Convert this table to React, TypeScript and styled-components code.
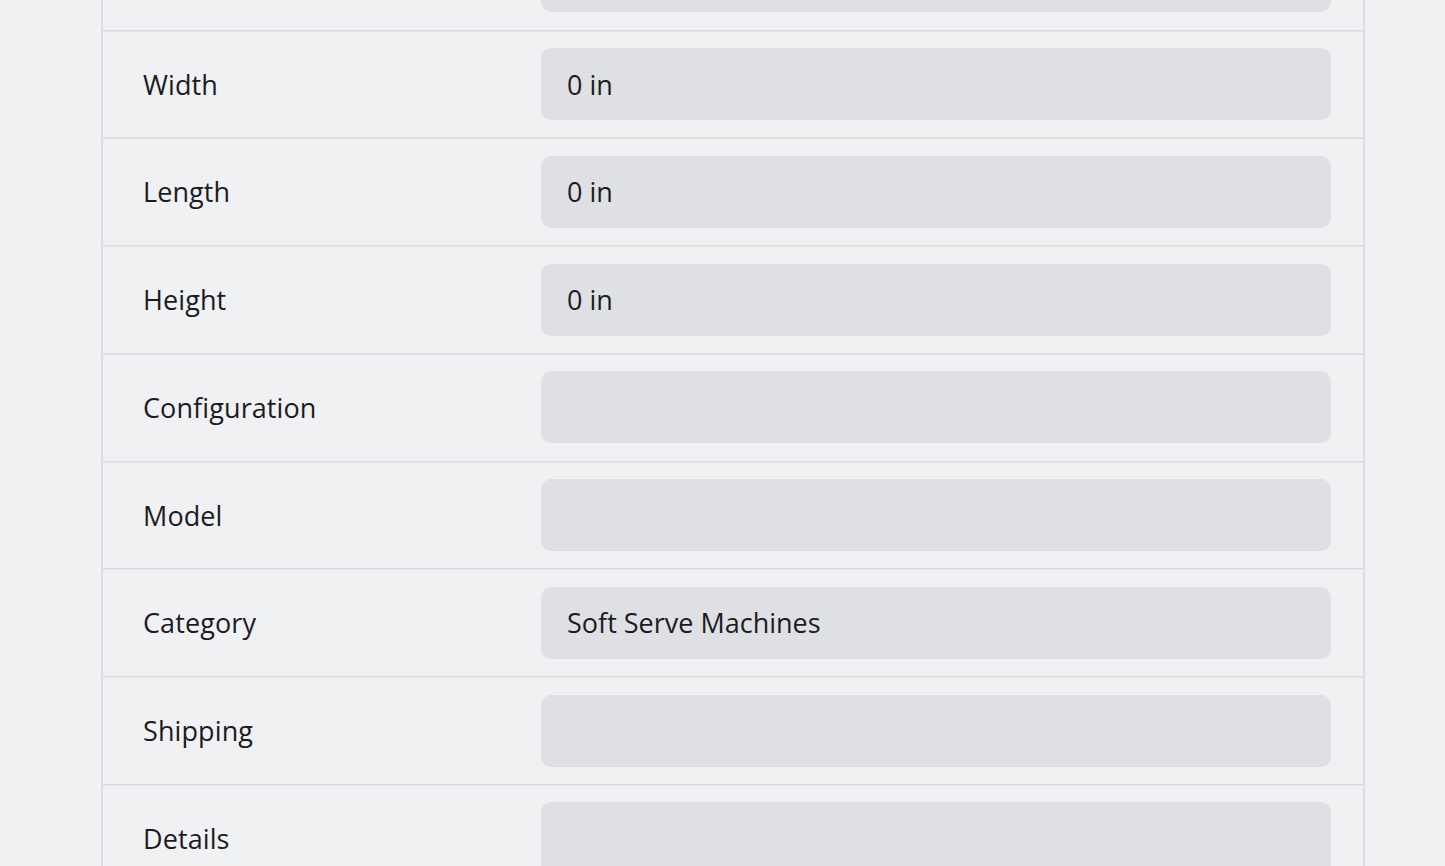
import React from "react";
import styled, { createGlobalStyle } from "styled-components";

const GlobalStyle = createGlobalStyle`
  html, body {
    margin: 0;
    padding: 0;
    background: #f0f1f3;
    height: 100%;
    overflow: hidden;
  }
  body {
    font-family: "Open Sans", "Noto Sans", "Liberation Sans", sans-serif;
    color: #1c1c1f;
  }
`;

const Viewport = styled.div`
  height: 866px;
  overflow: hidden;
`;

const Panel = styled.div`
  margin: -78px 0 0 101px;
  width: 1264px;
  box-sizing: border-box;
  border-left: 2px solid #dcdde0;
  border-right: 2px solid #dcdde0;
  background: #f0f1f3;
`;

const Row = styled.div`
  display: grid;
  grid-template-columns: 398px 1fr;
  align-items: start;
  padding: 17.4px 32px 17.35px 40px;
  border-top: 1px solid #d9dadd;
  box-shadow: inset 0 1px 0 #e4e5e8;
`;

const Label = styled.div`
  height: 72px;
  display: flex;
  align-items: center;
  font-size: 27px;
  letter-spacing: 0.1px;
`;

const Field = styled.div<{ $tall?: boolean }>`
  height: ${(p) => (p.$tall ? "160px" : "72px")};
  background: #dfe0e3;
  border-radius: 10px;
  box-sizing: border-box;
  padding: ${(p) => (p.$tall ? "18px 26px" : "0 26px")};
  display: flex;
  align-items: ${(p) => (p.$tall ? "flex-start" : "center")};
  font-size: 27px;
`;

const rows: { id: string; label: string; value: string; tall?: boolean }[] = [
  { id: "top", label: "", value: "" },
  { id: "width", label: "Width", value: "0 in" },
  { id: "length", label: "Length", value: "0 in" },
  { id: "height", label: "Height", value: "0 in" },
  { id: "configuration", label: "Configuration", value: "" },
  { id: "model", label: "Model", value: "" },
  { id: "category", label: "Category", value: "Soft Serve Machines" },
  { id: "shipping", label: "Shipping", value: "" },
  { id: "details", label: "Details", value: "", tall: true },
];

export default function App() {
  return (
    <Viewport>
      <GlobalStyle />
      <Panel>
        {rows.map((r) => (
          <Row key={r.id}>
            <Label>{r.label}</Label>
            <Field $tall={r.tall}>{r.value}</Field>
          </Row>
        ))}
      </Panel>
    </Viewport>
  );
}
